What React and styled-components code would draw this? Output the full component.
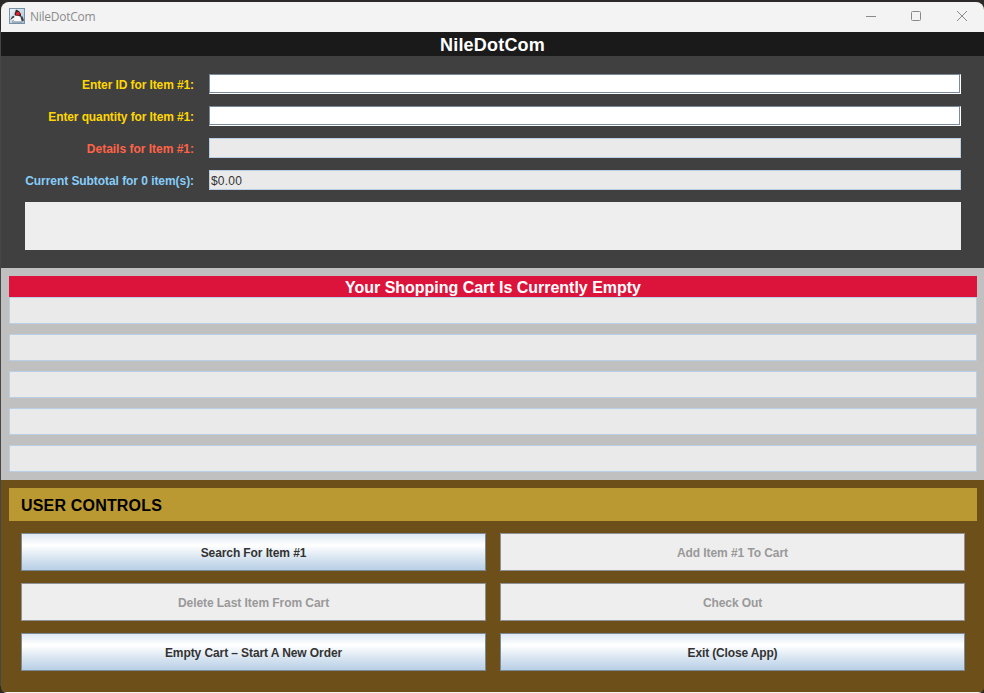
import React from "react";
import styled, { createGlobalStyle } from "styled-components";

const Global = createGlobalStyle`
  * { box-sizing: border-box; }
  body { margin: 0; background: #2b2929; overflow: hidden; font-family: "Liberation Sans", Arial, sans-serif; }
`;

const Desktop = styled.div`
  width: 984px;
  height: 693px;
  padding: 2px 0 0 1px;
  background: linear-gradient(#2b2929 0 30px, #464646 30px 686px, #2b2929 686px);
`;

const Window = styled.main`
  display: flex;
  flex-direction: column;
  width: 983px;
  height: 691px;
  overflow: hidden;
  border-radius: 8px 8px 6px 6px;
  background: #6c4f19;
`;

const TitleBar = styled.header`
  display: flex;
  align-items: center;
  height: 30px;
  flex: none;
  padding: 0 0 2px 8px;
  background: #f3f3f3;
`;

const AppName = styled.span`
  flex: 1;
  margin-left: 5px;
  padding-top: 2px;
  font: 12px/16px "Open Sans", sans-serif;
  letter-spacing: ${(p) => p.$spacing}px;
  color: #8c8c8c;
`;

const WindowButton = styled.button`
  display: flex;
  align-items: center;
  justify-content: center;
  width: ${(p) => p.$width}px;
  height: 28px;
  padding: 0;
  border: 0;
  background: none;
`;

const Heading = styled.h1`
  height: 24px;
  flex: none;
  margin: 0;
  padding-top: 1px;
  background: #1a1a1a;
  color: #fff;
  text-align: center;
  font-size: 18px;
  line-height: 24px;
  letter-spacing: ${(p) => p.$spacing}px;
`;

const Form = styled.section`
  display: flex;
  flex-direction: column;
  gap: 12px;
  height: 212px;
  flex: none;
  padding: 18px 23px 0 24px;
  background: #404040;
`;

const FormRow = styled.div`
  display: grid;
  grid-template-columns: 169px 752px;
  column-gap: 15px;
  height: 20px;
`;

const Label = styled.label`
  justify-self: end;
  white-space: nowrap;
  font-size: 12px;
  font-weight: bold;
  line-height: 22px;
  height: 20px;
  letter-spacing: ${(p) => p.$spacing}px;
  color: ${(p) => p.$color};
`;

const Input = styled.div`
  height: 20px;
  border: 1px solid;
  border-color: #7a8a99 #fff #fff #7a8a99;
  background: #fff;
  box-shadow: inset -1px -1px #7a8a99;
`;

const Output = styled.div`
  height: 20px;
  padding-left: 1px;
  border: 1px solid #b8cfe5;
  background: #eaeaea;
  color: #333;
  font-size: 12px;
  line-height: 20px;
  letter-spacing: 0.2px;
`;

const Message = styled.div`
  height: 48px;
  background: #eee;
`;

const Cart = styled.section`
  height: 212px;
  flex: none;
  padding: 8px 7px 0 8px;
  background: #c0c0c0;
`;

const CartBanner = styled.h2`
  height: 21px;
  margin: 0;
  background: #dc143c;
  color: #fff;
  text-align: center;
  font-size: 16px;
  line-height: 24px;
  letter-spacing: ${(p) => p.$spacing}px;
`;

const CartLines = styled.div`
  display: flex;
  flex-direction: column;
  gap: 10px;
`;

const CartLine = styled.div`
  height: 27px;
  border: 1px solid #b8cfe5;
  background: #eaeaea;
`;

const Controls = styled.section`
  height: 212px;
  flex: none;
  padding: 8px 7px 0 8px;
  background: #6c4f19;
`;

const ControlsTitle = styled.h2`
  height: 33px;
  margin: 0;
  padding-left: 12px;
  background: #ba9832;
  color: #000;
  font-size: 16px;
  line-height: 36px;
  letter-spacing: ${(p) => p.$spacing}px;
`;

const ButtonGrid = styled.div`
  display: grid;
  grid-template-columns: 465px 465px;
  gap: 12px 14px;
  padding: 12px;
`;

const Button = styled.button`
  height: 38px;
  padding: 1px 0 0;
  border: 1px solid #7a8a99;
  background: linear-gradient(#dde8f3, #fff 30%, #fff 32%, #dde8f3 62%, #b8cfe5);
  color: #333;
  font: bold 12px/16px "Liberation Sans", Arial, sans-serif;
  letter-spacing: ${(p) => p.$spacing}px;

  &:disabled {
    border-color: #8e9297;
    background: #eee;
    color: #999;
  }
`;

const BottomEdge = styled.div`
  height: 1px;
  flex: none;
  background: #f3f3f3;
`;

const DukeIcon = () => (
  <svg width="16" height="16" viewBox="0 0 16 16">
    <defs>
      <linearGradient id="sky" x2="1" y2="1">
        <stop stopColor="#f2f6fa" />
        <stop offset="1" stopColor="#a9c0d6" />
      </linearGradient>
    </defs>
    <rect x=".5" y=".5" width="15" height="15" fill="url(#sky)" stroke="#7891ab" />
    <path d="M1.5 11.5 3 8.5 6 7.5 7 12 4 13Z M11 8 13.5 8.5 15 12.5 13 13.5 10.5 12Z" fill="#3b4145" />
    <path d="M5.5 6.5 11 7 12 11 13 14H4l1-3Z" fill="#fafafa" />
    <path d="M2 11.5 5 9.5 6 11 3 13Z" fill="#f4f4f4" />
    <path d="M7 1.5 10 3 12 6 12 8.5 6 7.5 5.5 6Z" fill="#292b2d" />
    <circle cx="8.8" cy="5.7" r="2" fill="#e02028" />
    <path d="M3 14h10" stroke="#6f7e8c" />
  </svg>
);

const fields = [
  { label: "Enter ID for Item #1:", color: "#ffd700", spacing: -0.1, editable: true },
  { label: "Enter quantity for Item #1:", color: "#ffd700", spacing: -0.11, editable: true },
  { label: "Details for Item #1:", color: "#ff6347", spacing: -0.01 },
  { label: "Current Subtotal for 0 item(s):", color: "#87cefa", spacing: -0.06, value: "$0.00" },
];

const actions = [
  { text: "Search For Item #1", spacing: -0.1 },
  { text: "Add Item #1 To Cart", spacing: -0.08, disabled: true },
  { text: "Delete Last Item From Cart", spacing: -0.06, disabled: true },
  { text: "Check Out", spacing: -0.1, disabled: true },
  { text: "Empty Cart – Start A New Order", spacing: -0.09 },
  { text: "Exit (Close App)", spacing: -0.15 },
];

export default function App() {
  return (
    <Desktop>
      <Global />
      <Window>
        <TitleBar>
          <DukeIcon />
          <AppName $spacing={-0.25}>NileDotCom</AppName>
          <WindowButton $width={42} aria-label="Minimize">
            <svg width="12" height="12" fill="none" stroke="#8a8a8a"><path d="M1 6.5h10" /></svg>
          </WindowButton>
          <WindowButton $width={48} aria-label="Maximize">
            <svg width="12" height="12" fill="none" stroke="#8a8a8a"><rect x="1.5" y="1.5" width="9" height="9" rx="1" /></svg>
          </WindowButton>
          <WindowButton $width={44} aria-label="Close">
            <svg width="12" height="12" fill="none" stroke="#8a8a8a"><path d="m1 1 10 10M11 1 1 11" /></svg>
          </WindowButton>
        </TitleBar>
        <Heading $spacing={0.2}>NileDotCom</Heading>
        <Form>
          {fields.map((f) => (
            <FormRow key={f.label}>
              <Label $color={f.color} $spacing={f.spacing}>{f.label}</Label>
              {f.editable ? <Input /> : <Output>{f.value}</Output>}
            </FormRow>
          ))}
          <Message />
        </Form>
        <Cart>
          <CartBanner $spacing={-0.02}>Your Shopping Cart Is Currently Empty</CartBanner>
          <CartLines>
            {[1, 2, 3, 4, 5].map((n) => <CartLine key={n} />)}
          </CartLines>
        </Cart>
        <Controls>
          <ControlsTitle $spacing={0.18}>USER CONTROLS</ControlsTitle>
          <ButtonGrid>
            {actions.map((a) => (
              <Button key={a.text} $spacing={a.spacing} disabled={a.disabled}>{a.text}</Button>
            ))}
          </ButtonGrid>
        </Controls>
        <BottomEdge />
      </Window>
    </Desktop>
  );
}
